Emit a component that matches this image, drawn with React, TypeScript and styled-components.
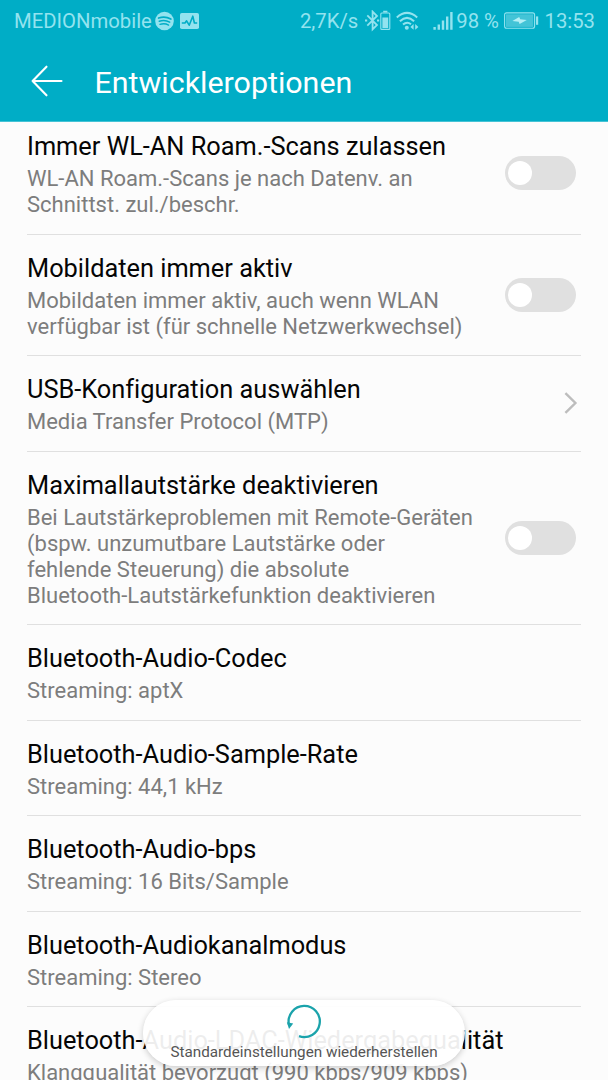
import React from "react";
import styled, { createGlobalStyle } from "styled-components";

const GlobalStyle = createGlobalStyle`
  * { box-sizing: border-box; }
  body { margin: 0; background: #fcfcfc; font-family: Roboto, sans-serif; font-variant-ligatures: none; overflow: hidden; }
`;

const Screen = styled.div`
  position: relative;
  display: flex;
  flex-direction: column;
  width: 608px;
  height: 1080px;
  overflow: hidden;
  background: #fcfcfc;
`;

const Header = styled.header`
  flex: none;
  height: 122px;
  background: #00adc6;
  border-bottom: 1px solid #45c3d5;
  z-index: 1;
`;

const StatusBar = styled.div`
  display: flex;
  align-items: center;
  height: 42px;
  padding: 0 13px 0 14px;
  color: #93e3ef;
`;

const StatusText = styled.span<{ $left?: number }>`
  margin-left: ${(p) => p.$left ?? 0}px;
  font-size: 20.3px;
  line-height: 42px;
  white-space: nowrap;
`;

const StatusIcon = styled.svg<{ $left?: number }>`
  flex: none;
  display: block;
  margin-left: ${(p) => p.$left ?? 0}px;
`;

const Spacer = styled.div`
  flex: 1;
`;

const TitleBar = styled.div`
  display: flex;
  align-items: center;
  height: 78px;
  padding-left: 31px;
`;

const Heading = styled.h1`
  margin: 3px 0 0 31.5px;
  color: #fff;
  font-size: 30.4px;
  font-weight: 400;
  line-height: 40px;
`;

const List = styled.main`
  flex: none;
  margin: -9px 27px 0;
`;

const Row = styled.section`
  display: flex;
  align-items: center;
  justify-content: space-between;
  padding: 18px 5px 15.5px 0;
  border-bottom: 1px solid #e0e0e0;
`;

const RowTitle = styled.h2`
  margin: 0;
  color: #050505;
  font-size: 25.35px;
  font-weight: 400;
  line-height: 31px;
  height: 35px;
  white-space: nowrap;
`;

const RowNote = styled.p`
  margin: 0;
  color: #7d7d7d;
  font-size: 22px;
  line-height: 26px;
  white-space: nowrap;
`;

const Toggle = styled.div`
  flex: none;
  display: flex;
  align-items: center;
  width: 71px;
  height: 34px;
  margin-bottom: 3px;
  padding-left: 3px;
  border-radius: 17px;
  background: #e0e0e0;
`;

const Knob = styled.div`
  width: 24px;
  height: 24px;
  border-radius: 50%;
  background: #fff;
`;

const Chevron = styled.svg`
  flex: none;
  display: block;
  margin: 0 -2px 3px 0;
`;

const ResetButton = styled.button`
  position: absolute;
  left: 143px;
  top: 1000px;
  display: flex;
  flex-direction: column;
  align-items: center;
  width: 322px;
  height: 66px;
  padding: 3px 0 0;
  border: 0;
  border-radius: 33px;
  background: rgba(255, 255, 255, 0.93);
  box-shadow: 0 2px 6px rgba(0, 0, 0, 0.2);
`;

const ResetLabel = styled.span`
  color: #555;
  font-family: Roboto, sans-serif;
  font-size: 15.25px;
  line-height: 20px;
  white-space: nowrap;
  margin-top: 3px;
`;

type Item = { title: string; lines: string[]; control?: "toggle" | "chevron" };

const items: Item[] = [
  { title: "Immer WL-AN Roam.-Scans zulassen", lines: ["WL-AN Roam.-Scans je nach Datenv. an", "Schnittst. zul./beschr."], control: "toggle" },
  { title: "Mobildaten immer aktiv", lines: ["Mobildaten immer aktiv, auch wenn WLAN", "verfügbar ist (für schnelle Netzwerkwechsel)"], control: "toggle" },
  { title: "USB-Konfiguration auswählen", lines: ["Media Transfer Protocol (MTP)"], control: "chevron" },
  {
    title: "Maximallautstärke deaktivieren",
    lines: ["Bei Lautstärkeproblemen mit Remote-Geräten", "(bspw. unzumutbare Lautstärke oder", "fehlende Steuerung) die absolute", "Bluetooth-Lautstärkefunktion deaktivieren"],
    control: "toggle",
  },
  { title: "Bluetooth-Audio-Codec", lines: ["Streaming: aptX"] },
  { title: "Bluetooth-Audio-Sample-Rate", lines: ["Streaming: 44,1 kHz"] },
  { title: "Bluetooth-Audio-bps", lines: ["Streaming: 16 Bits/Sample"] },
  { title: "Bluetooth-Audiokanalmodus", lines: ["Streaming: Stereo"] },
  { title: "Bluetooth-Audio-LDAC-Wiedergabequalität", lines: ["Klangqualität bevorzugt (990 kbps/909 kbps)"] },
];

const SpotifyIcon = () => (
  <StatusIcon $left={3} width="19" height="20" viewBox="0 0 19 20">
    <circle cx="9.5" cy="10" r="9.3" fill="#93e3ef" />
    <g fill="none" stroke="#00adc6" strokeLinecap="round">
      <path d="M3.6 7 Q10 4.8 15.8 8" strokeWidth="1.8" />
      <path d="M4.3 10.3 Q9.8 8.4 14.7 11.2" strokeWidth="1.5" />
      <path d="M4.9 13.4 Q9.6 11.8 13.6 14.1" strokeWidth="1.3" />
    </g>
  </StatusIcon>
);

const MonitorIcon = () => (
  <StatusIcon $left={6.5} width="19" height="17" viewBox="0 0 19 17">
    <rect width="19" height="16" y="0" rx="1.8" fill="#93e3ef" />
    <path d="M1.8 10H5l1.6-2.2 2.6 4.4 3.6-9 1.6 6.8h2.8" fill="none" stroke="#00adc6" strokeWidth="1.6" strokeLinejoin="round" />
  </StatusIcon>
);

const BluetoothIcon = () => (
  <StatusIcon $left={7} width="26" height="22" viewBox="0 0 26 22">
    <path d="M2.3 5.3 12 15 7.6 19.4V1.6L12 6 2.3 15.7" fill="none" stroke="#93e3ef" strokeWidth="1.8" />
    <path d="M0 9.4h2.2v2.2H0zM12 9.4h2.2v2.2H12z" fill="#93e3ef" />
    <rect x="15.8" y="3" width="9" height="16.4" rx="1" fill="none" stroke="#93e3ef" strokeWidth="1.1" />
    <path d="M18.2 0.8h4.2v1.6h-4.2zM17.4 7.5h5.8V18h-5.8z" fill="#93e3ef" />
  </StatusIcon>
);

const WifiIcon = () => (
  <StatusIcon $left={5} width="23" height="20" viewBox="0 0 23 20">
    <g fill="none" stroke="#93e3ef" strokeWidth="2">
      <path d="M0.8 6.4Q11 -2.6 21.2 6.4" />
      <path d="M3.9 10.2Q11 3.6 18.1 10.2" />
      <path d="M7 13.6Q11 10 15 13.2" />
    </g>
    <circle cx="10.8" cy="16.8" r="2" fill="#93e3ef" />
    <path d="M17.6 13v5.8L14.4 15.9zM19.2 13v5.8l3.2-2.9z" fill="#93e3ef" />
  </StatusIcon>
);

const SignalIcon = () => (
  <StatusIcon $left={14} width="20" height="20" viewBox="0 0 20 20">
    <path d="M0.4 16h2.4v2.7H.4zM4.6 13.4H7v5.3H4.6zM8.8 9.5h2.4v9.2H8.8zM13 5.4h2.4v13.3H13zM17.2 1h2.4v17.7h-2.4z" fill="#93e3ef" />
  </StatusIcon>
);

const BatteryIcon = () => (
  <StatusIcon $left={5.5} width="35" height="18" viewBox="0 0 35 18">
    <rect x="0.6" y="0.9" width="30" height="15.4" rx="2" fill="none" stroke="#93e3ef" strokeWidth="1.1" />
    <rect x="2" y="2.3" width="27.2" height="12.6" fill="#43c4d7" />
    <path d="M32 4.4h2.2v8.4H32z" fill="#93e3ef" />
    <path d="M8.4 9 15.2 5l1 2.3 6.6.8-7.2 4-.9-2.3z" fill="#b5f0f7" />
  </StatusIcon>
);

export default function App() {
  return (
    <Screen>
      <GlobalStyle />
      <Header>
        <StatusBar>
          <StatusText>MEDIONmobile</StatusText>
          <SpotifyIcon />
          <MonitorIcon />
          <Spacer />
          <StatusText>2,7K/s</StatusText>
          <BluetoothIcon />
          <WifiIcon />
          <SignalIcon />
          <StatusText $left={3}>98 %</StatusText>
          <BatteryIcon />
          <StatusText $left={5}>13:53</StatusText>
        </StatusBar>
        <TitleBar>
          <svg width="32" height="32" viewBox="0 0 32 32" fill="none" stroke="#fff" strokeWidth="2.1" strokeLinecap="round" strokeLinejoin="round">
            <path d="M1.6 16H30.5M15.5 1.7 1.6 16 15.5 30.3" />
          </svg>
          <Heading>Entwickleroptionen</Heading>
        </TitleBar>
      </Header>
      <List>
        {items.map((item) => (
          <Row key={item.title}>
            <div>
              <RowTitle>{item.title}</RowTitle>
              {item.lines.map((line) => (
                <RowNote key={line}>{line}</RowNote>
              ))}
            </div>
            {item.control === "toggle" && (
              <Toggle>
                <Knob />
              </Toggle>
            )}
            {item.control === "chevron" && (
              <Chevron width="14" height="24" viewBox="0 0 14 24" fill="none" stroke="#bdbdbd" strokeWidth="2.4">
                <path d="M1.4 2.2 11.4 12 1.4 21.8" />
              </Chevron>
            )}
          </Row>
        ))}
      </List>
      <ResetButton>
        <svg width="36" height="36" viewBox="0 0 36 36">
          <path d="M2.9 21.5A15.6 15.6 0 1 1 13 33.2" fill="none" stroke="#1ba3ab" strokeWidth="2.3" />
          <path d="M0.9 19.2 7.2 20.4 3 26z" fill="#1ba3ab" />
        </svg>
        <ResetLabel>Standardeinstellungen wiederherstellen</ResetLabel>
      </ResetButton>
    </Screen>
  );
}
